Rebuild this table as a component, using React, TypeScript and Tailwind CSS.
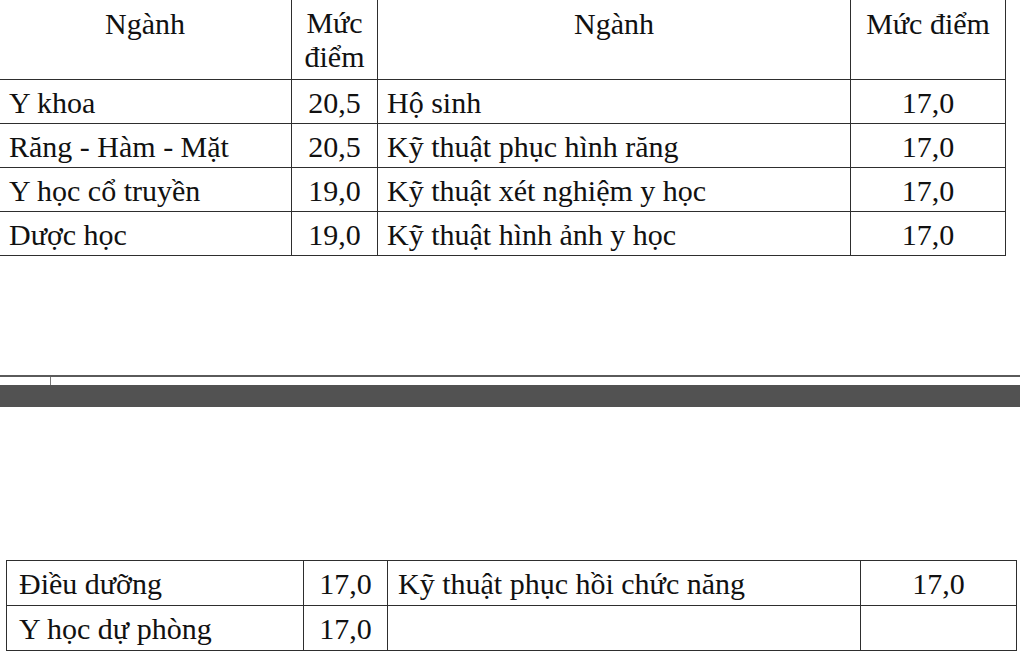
const topRows = [
  ['Y khoa', '20,5', 'Hộ sinh', '17,0'],
  ['Răng - Hàm - Mặt', '20,5', 'Kỹ thuật phục hình răng', '17,0'],
  ['Y học cổ truyền', '19,0', 'Kỹ thuật xét nghiệm y học', '17,0'],
  ['Dược học', '19,0', 'Kỹ thuật hình ảnh y học', '17,0'],
]

const bottomRows = [
  ['Điều dưỡng', '17,0', 'Kỹ thuật phục hồi chức năng', '17,0'],
  ['Y học dự phòng', '17,0', '', ''],
]

const cell =
  'border-[1.5px] border-[#2e2e2e] p-0 [font-family:Liberation_Serif,serif] text-[30px] text-[#111]'
const head = `${cell} pt-[1px] text-center align-top font-normal leading-[45px]`
const body = `${cell} pt-[2px] leading-[40px] whitespace-nowrap`

export default function App() {
  return (
    <div className="flex h-[656px] w-[1020px] flex-col overflow-hidden bg-white">
      {/* upper part of the scanned table */}
      <table className="ml-[-2px] mt-[-1px] w-[1007px] self-start table-fixed border-collapse">
        <colgroup>
          <col className="w-[293px]" />
          <col className="w-[86px]" />
          <col className="w-[473px]" />
          <col className="w-[155px]" />
        </colgroup>
        <thead>
          <tr className="h-[80px]">
            <th className={head}>Ngành</th>
            <th className={`${cell} pt-[6px] text-center align-top font-normal leading-[34px]`}>
              Mức
              <br />
              điểm
            </th>
            <th className={head}>Ngành</th>
            <th className={head}>Mức điểm</th>
          </tr>
        </thead>
        <tbody>
          {topRows.map((r) => (
            <tr key={r[0]} className="h-[44px]">
              <td className={`${body} pl-[10px]`}>{r[0]}</td>
              <td className={`${body} text-center`}>{r[1]}</td>
              <td className={`${body} pl-[9px]`}>{r[2]}</td>
              <td className={`${body} text-center`}>{r[3]}</td>
            </tr>
          ))}
        </tbody>
      </table>

      {/* page break between the two scans */}
      <div className="mt-[119px] h-[2px] w-full bg-[#5a5a5a]" />
      <div className="h-[8px] w-full">
        <div className="ml-[50px] h-full w-px bg-[#777]" />
      </div>
      <div className="h-[22px] w-full bg-[#525252]" />

      {/* lower part of the scanned table */}
      <table className="ml-[6px] mt-[153px] w-[1010px] self-start table-fixed border-collapse">
        <colgroup>
          <col className="w-[297px]" />
          <col className="w-[84px]" />
          <col className="w-[473px]" />
          <col className="w-[156px]" />
        </colgroup>
        <tbody>
          {bottomRows.map((r) => (
            <tr key={r[0]} className="h-[45px]">
              <td className={`${body} pl-[12px]`}>{r[0]}</td>
              <td className={`${body} text-center`}>{r[1]}</td>
              <td className={`${body} pl-[10px]`}>{r[2]}</td>
              <td className={`${body} text-center`}>{r[3]}</td>
            </tr>
          ))}
        </tbody>
      </table>
    </div>
  )
}
